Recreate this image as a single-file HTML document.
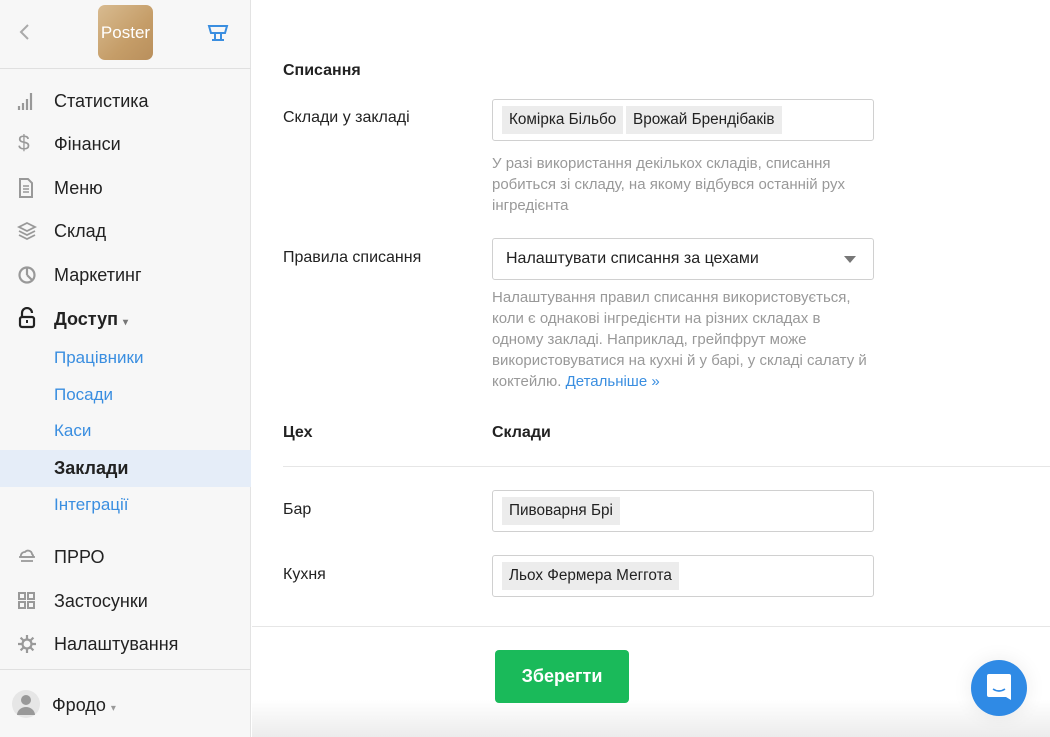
<!DOCTYPE html>
<html><head><meta charset="utf-8"><style>
*{margin:0;padding:0;box-sizing:border-box}
body{width:1050px;height:737px;overflow:hidden;background:#fff;font-family:"Liberation Sans",Arial,sans-serif;color:#222;position:relative}
.a{position:absolute;white-space:nowrap}
#sb{position:absolute;left:0;top:0;width:251px;height:737px;background:#f7f7f7;border-right:1px solid #e3e3e3}
.hl{position:absolute;left:0;width:251px;height:1px;background:#e0e0e0}
.mi{position:absolute;left:54px;font-size:18px;color:#222;line-height:20px}
.ic{position:absolute;left:17px}
.sub{position:absolute;left:54px;font-size:17px;color:#3a8ee0;line-height:20px}
.lbl{position:absolute;left:283px;font-size:16px;color:#222;line-height:20px}
.fld{position:absolute;left:492px;width:382px;height:42px;border:1px solid #d0d0d0;border-radius:3px;background:#fff}
.tag{position:absolute;top:6px;height:28px;background:#ececec;font-size:15.3px;line-height:28px;padding:0 7px;color:#222}
.help{position:absolute;left:492px;font-size:15px;line-height:21px;color:#999}
</style></head><body>
<div id="sb">
  <div class="hl" style="top:68px"></div>
  <div class="hl" style="top:669px"></div>
  <svg class="a" style="left:18px;top:23px" width="14" height="18" viewBox="0 0 14 18"><path d="M10 2 L3 9 L10 16" fill="none" stroke="#aaa" stroke-width="2"/></svg>
  <div class="a" style="left:98px;top:5px;width:55px;height:55px;border-radius:7px;background:linear-gradient(135deg,#d8bb90,#c59d68 60%,#b98f5c);color:#fff;font-size:17px;line-height:55px;text-align:center">Poster</div>
  <svg class="a" style="left:207px;top:24px" width="22" height="18" viewBox="0 0 22 18"><path d="M2 2 H20 L18 9 H4 Z" fill="none" stroke="#3a8ee0" stroke-width="2"/><path d="M8 9 V15 M14 9 V15 M5 16 H17" stroke="#3a8ee0" stroke-width="2"/></svg>

  <svg class="ic" style="top:91px" width="18" height="20"><path d="M2 19V15M6 19V12M10 19V8M14 19V2" stroke="#999" stroke-width="2.2"/></svg>
  <div class="mi" style="top:91px">Статистика</div>
  <div class="a" style="left:18px;top:132px;font-size:21px;color:#999">$</div>
  <div class="mi" style="top:134px">Фінанси</div>
  <svg class="ic" style="top:178px" width="18" height="20"><path d="M3 1H11L15 5V19H3Z" fill="none" stroke="#999" stroke-width="2"/><path d="M6 8H12M6 11H12M6 14H12" stroke="#999" stroke-width="1.5"/></svg>
  <div class="mi" style="top:178px">Меню</div>
  <svg class="ic" style="top:221px" width="20" height="20"><path d="M10 2 L18 6 L10 10 L2 6Z M2 10 L10 14 L18 10 M2 14 L10 18 L18 14" fill="none" stroke="#999" stroke-width="1.8"/></svg>
  <div class="mi" style="top:221px">Склад</div>
  <svg class="ic" style="top:265px" width="20" height="20"><circle cx="10" cy="10" r="7.5" fill="none" stroke="#999" stroke-width="2.2"/><path d="M10 10V2.5M10 10L15.5 15.5" stroke="#999" stroke-width="2.2"/></svg>
  <div class="mi" style="top:265px">Маркетинг</div>
  <svg class="ic" style="top:307px" width="20" height="22"><path d="M5 10V6a5 5 0 0 1 10 0" fill="none" stroke="#222" stroke-width="2.2"/><rect x="3" y="10" width="14" height="10" rx="2" fill="none" stroke="#222" stroke-width="2.2"/><path d="M10 13V16" stroke="#222" stroke-width="2"/></svg>
  <div class="mi" style="top:309px;font-weight:bold">Доступ <span style="font-size:10px;color:#777">▾</span></div>
  <div class="sub" style="top:348px">Працівники</div>
  <div class="sub" style="top:385px">Посади</div>
  <div class="sub" style="top:421px">Каси</div>
  <div class="a" style="left:0;top:450px;width:251px;height:37px;background:#e5edf8"></div>
  <div class="mi" style="top:458px;font-weight:bold">Заклади</div>
  <div class="sub" style="top:495px">Інтеграції</div>
  <svg class="ic" style="top:548px" width="20" height="18"><path d="M4 9a4 4 0 0 1 4-5a4 4 0 0 1 7 2a3 3 0 0 1 1 3Z" fill="none" stroke="#999" stroke-width="1.8"/><path d="M2 9H18M4 13H16" stroke="#999" stroke-width="1.8"/></svg>
  <div class="mi" style="top:547px">ПРРО</div>
  <svg class="ic" style="top:591px" width="20" height="20"><g fill="none" stroke="#999" stroke-width="2"><rect x="2" y="2" width="6" height="6"/><rect x="11" y="2" width="6" height="6"/><rect x="2" y="11" width="6" height="6"/><rect x="11" y="11" width="6" height="6"/></g></svg>
  <div class="mi" style="top:591px">Застосунки</div>
  <svg class="ic" style="top:634px" width="20" height="20"><circle cx="10" cy="10" r="4.5" fill="none" stroke="#999" stroke-width="2.2"/><path d="M10 1V5M10 15V19M1 10H5M15 10H19M3.6 3.6L6.5 6.5M13.5 13.5L16.4 16.4M3.6 16.4L6.5 13.5M13.5 6.5L16.4 3.6" stroke="#999" stroke-width="2.2"/></svg>
  <div class="mi" style="top:634px">Налаштування</div>
  <svg class="a" style="left:12px;top:690px" width="28" height="28"><circle cx="14" cy="14" r="14" fill="#e6e6e6"/><circle cx="14" cy="10" r="5" fill="#999"/><path d="M5 25a9 8 0 0 1 18 0Z" fill="#999"/></svg>
  <div class="mi" style="left:52px;top:695px">Фродо <span style="font-size:10px;color:#999">▾</span></div>
</div>

<div class="lbl" style="top:61px;font-weight:bold">Списання</div>
<div class="lbl" style="top:108px">Склади у закладі</div>
<div class="fld" style="top:99px"><div class="tag" style="left:9px">Комірка Більбо</div><div class="tag" style="left:133px">Врожай Брендібаків</div></div>
<div class="help" style="top:153px">У разі використання декількох складів, списання<br>робиться зі складу, на якому відбувся останній рух<br>інгредієнта</div>
<div class="lbl" style="top:248px">Правила списання</div>
<div class="fld" style="top:238px"><div class="a" style="left:13px;top:11px;font-size:16px">Налаштувати списання за цехами</div><svg class="a" style="left:351px;top:17px" width="12" height="7"><path d="M0 0H12L6 7Z" fill="#777"/></svg></div>
<div class="help" style="top:287px">Налаштування правил списання використовується,<br>коли є однакові інгредієнти на різних складах в<br>одному закладі. Наприклад, грейпфрут може<br>використовуватися на кухні й у барі, у складі салату й<br>коктейлю. <span style="color:#3a8ee0">Детальніше »</span></div>
<div class="lbl" style="top:423px;font-weight:bold">Цех</div>
<div class="lbl" style="left:492px;top:423px;font-weight:bold">Склади</div>
<div class="a" style="left:283px;top:466px;width:767px;height:1px;background:#e6e6e6"></div>
<div class="lbl" style="top:500px">Бар</div>
<div class="fld" style="top:490px"><div class="tag" style="left:9px">Пивоварня Брі</div></div>
<div class="lbl" style="top:565px">Кухня</div>
<div class="fld" style="top:555px"><div class="tag" style="left:9px">Льох Фермера Меггота</div></div>
<div class="a" style="left:252px;top:626px;width:798px;height:1px;background:#e6e6e6"></div>
<div class="a" style="left:252px;top:700px;width:798px;height:37px;background:linear-gradient(#fff,#ececec)"></div>
<div class="a" style="left:495px;top:650px;width:134px;height:53px;background:#1aba5a;border-radius:4px;color:#fff;font-size:18px;font-weight:bold;text-align:center;line-height:53px">Зберегти</div>
<div class="a" style="left:971px;top:660px;width:56px;height:56px;border-radius:50%;background:#2f8ae5;box-shadow:0 0 20px rgba(0,0,0,.08)"></div>
<svg class="a" style="left:986px;top:673px" width="27" height="28"><path d="M3 1H23a2 2 0 0 1 2 2V27L20 24H3a2 2 0 0 1-2-2V3a2 2 0 0 1 2-2Z" fill="#fff"/><path d="M7 16q6 4 12 0" fill="none" stroke="#2f8ae5" stroke-width="1.6"/></svg>
</body></html>
